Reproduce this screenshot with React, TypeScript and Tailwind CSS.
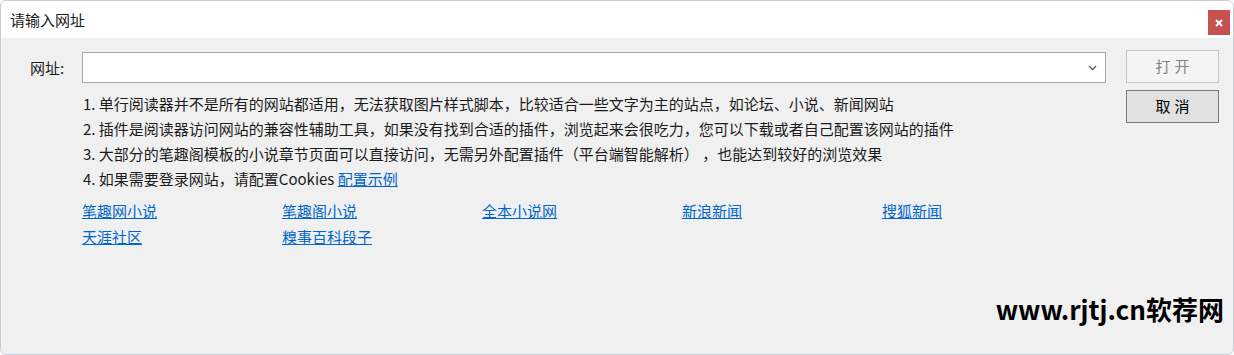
import React from 'react';

const tips = [
  '1. 单行阅读器并不是所有的网站都适用，无法获取图片样式脚本，比较适合一些文字为主的站点，如论坛、小说、新闻网站',
  '2. 插件是阅读器访问网站的兼容性辅助工具，如果没有找到合适的插件，浏览起来会很吃力，您可以下载或者自己配置该网站的插件',
  '3. 大部分的笔趣阁模板的小说章节页面可以直接访问，无需另外配置插件（平台端智能解析） ，也能达到较好的浏览效果',
];

const sites = ['笔趣网小说', '笔趣阁小说', '全本小说网', '新浪新闻', '搜狐新闻', '天涯社区', '糗事百科段子'];

const App: React.FC = () => {
  return (
    <div
      className="relative w-[1234px] h-[355px] overflow-hidden rounded-[6px] border border-[#c8ccd3] bg-[#f0f0f0] text-[15px] text-[#1b1b1b] flex flex-col"
      style={{ fontFamily: '"Noto Sans CJK SC", "Noto Sans", sans-serif' }}
    >
      {/* Title bar */}
      <div className="h-[37px] shrink-0 bg-white flex items-center justify-between pl-[9px] pr-[3px]">
        <span className="leading-none">请输入网址</span>
        <button className="w-[22px] h-[25px] mt-[6px] bg-[#c75050] flex items-center justify-center">
          <svg width="10" height="10" viewBox="0 0 10 10">
            <path d="M2 2 L8 8 M8 2 L2 8" stroke="#fff" strokeWidth="2" />
          </svg>
        </button>
      </div>

      {/* Body */}
      <div className="flex items-start pl-[29px] pt-[12px]">
        <label className="w-[52px] mt-[2px] leading-[31px]">网址:</label>

        <div className="w-[1024px] flex flex-col">
          <div className="mt-[2px] h-[31px] bg-white border border-[#a9a9a9] flex items-center justify-end pr-[8px]">
            <svg width="9" height="6" viewBox="0 0 9 6">
              <path d="M1 1 L4.5 4.5 L8 1" stroke="#5a5a5a" strokeWidth="1.3" fill="none" />
            </svg>
          </div>

          <div className="mt-[8px] pl-[1px] leading-[25px] whitespace-pre">
            {tips.map(t => (
              <div key={t}>{t}</div>
            ))}
            <div>
              4. 如果需要登录网站，请配置Cookies <a className="text-[#0066cc] underline">配置示例</a>
            </div>
          </div>

          <div className="mt-[7px] grid grid-cols-[200px_200px_200px_200px_200px] leading-[26px]">
            {sites.map(s => (
              <a key={s} className="text-[#0066cc] underline w-fit">
                {s}
              </a>
            ))}
          </div>
        </div>

        <div className="ml-[20px] w-[93px] flex flex-col gap-[7px]">
          <button className="h-[33px] bg-[#f4f4f4] border border-[#c4c4c4] text-[#838383] tracking-[4px] pl-[4px]">
            打开
          </button>
          <button className="h-[33px] bg-[#e1e1e1] border border-[#7a7a7a] text-black tracking-[4px] pl-[4px]">
            取消
          </button>
        </div>
      </div>

      {/* Watermark */}
      <div className="absolute right-[9px] top-[290px] text-[26px] font-bold leading-[36px] text-black">
        www.rjtj.cn软荐网
      </div>
    </div>
  );
};

export default App;
